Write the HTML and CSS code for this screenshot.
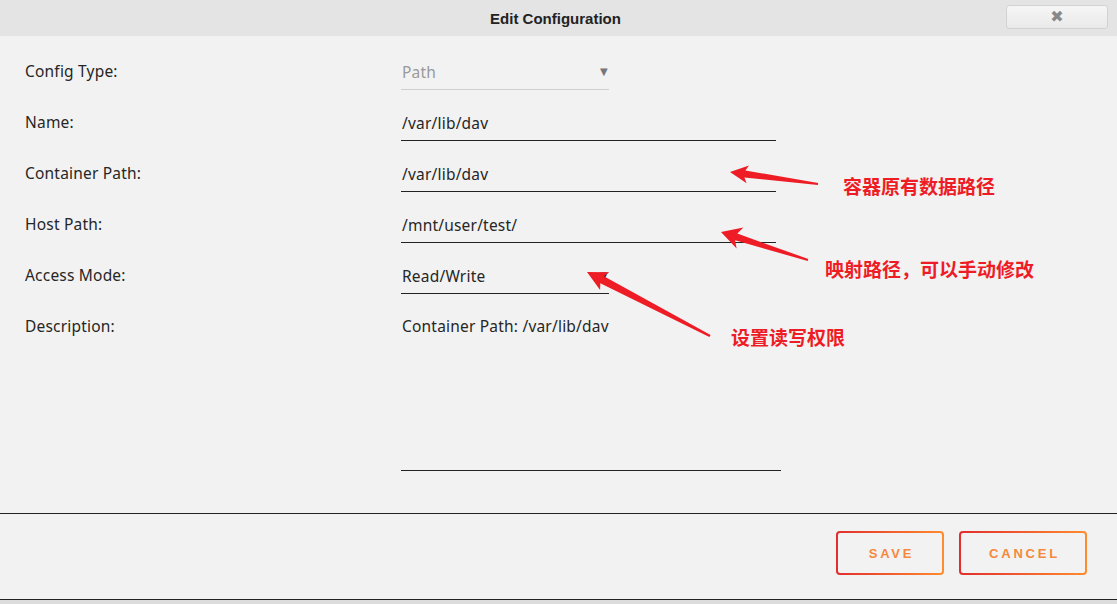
FILE: index.html
```html
<!DOCTYPE html>
<html lang="en">
<head>
  <meta charset="UTF-8" />
  <meta name="viewport" content="width=device-width, initial-scale=1.0"/>
  <title>Edit Configuration</title>
  <link rel="stylesheet" href="styles.css">
</head>
<body>
  <div class="dialog">
    <div class="titlebar">
      <span class="title">Edit Configuration</span>
      <button class="close" type="button">✖</button>
    </div>

    <form class="form">
      <div class="row">
        <label class="label">Config Type:</label>
        <div class="field select muted">Path<span class="caret">▼</span></div>
      </div>
      <div class="row">
        <label class="label">Name:</label>
        <div class="field">/var/lib/dav</div>
      </div>
      <div class="row">
        <label class="label">Container Path:</label>
        <div class="field">/var/lib/dav</div>
      </div>
      <div class="row">
        <label class="label">Host Path:</label>
        <div class="field">/mnt/user/test/</div>
      </div>
      <div class="row">
        <label class="label">Access Mode:</label>
        <div class="field select">Read/Write<span class="caret">▼</span></div>
      </div>
      <div class="row">
        <label class="label">Description:</label>
        <div class="field textarea">Container Path: /var/lib/dav</div>
      </div>
    </form>

    <div class="footer">
      <button class="btn save" type="button">SAVE</button>
      <button class="btn cancel" type="button">CANCEL</button>
    </div>
  </div>

  <!-- annotations drawn over the screenshot -->
  <div class="notes">
    <svg width="1117" height="604" viewBox="0 0 1117 604">
      <polygon fill="#ee1c25" points="730,172 749,165.5 745.4,170.5 818.1,183 817.9,185 744.4,177.5 746.6,183.3"/>
      <polygon fill="#ee1c25" points="721,232 743.4,227.6 737.3,233.6 808.3,259 807.7,261 735.1,240.2 736.6,248.6"/>
      <polygon fill="#ee1c25" points="587,272 609.3,272.3 603.9,276.3 710.6,334.9 709.4,337.1 600.3,283.3 600.1,290.1"/>
    </svg>
    <span class="note note-1">容器原有数据路径</span>
    <span class="note note-2">映射路径，可以手动修改</span>
    <span class="note note-3">设置读写权限</span>
  </div>
</body>
</html>
```

FILE: styles.css
```css
* {
  box-sizing: border-box;
}

body {
  margin: 0;
  height: 604px;
  overflow: hidden;
  background: #dcdcdc;
  font-family: 'Noto Sans', 'Open Sans', sans-serif;
  color: #262626;
  position: relative;
}

.dialog {
  background: #f2f2f2;
}

.titlebar {
  height: 36px;
  background: #e4e4e4;
  display: grid;
  grid-template-columns: 1fr auto 1fr;
  align-items: center;
}

.title {
  grid-column: 2;
  font-family: 'Liberation Sans', Arial, sans-serif;
  font-size: 15px;
  font-weight: bold;
  color: #222;
  margin-left: -6px;
}

.close {
  grid-column: 3;
  justify-self: end;
  margin-right: 9px;
  margin-top: -2px;
  width: 102px;
  height: 24px;
  border: 1px solid #d2d2d2;
  border-radius: 3px;
  background: linear-gradient(#f6f6f6, #e9e9e9);
  color: #888;
  font-family: 'DejaVu Sans', sans-serif;
  font-size: 16px;
  padding: 0;
  line-height: 22px;
}

.form {
  padding: 18px 0 42px;
  display: flex;
  flex-direction: column;
  gap: 15px;
}

.row {
  display: grid;
  grid-template-columns: 376px auto;
  padding-left: 25px;
  font-size: 15.5px;
  letter-spacing: 0.2px;
  line-height: 20px;
}

.label {
  padding-top: 7px;
}

.field {
  width: 375px;
  height: 36px;
  padding: 8px 0 7px 1px;
  border-bottom: 1px solid #222;
}

.select {
  width: 208px;
  display: flex;
  justify-content: space-between;
  padding-right: 1px;
}

.muted {
  color: #9a9a9a;
  border-bottom-color: #cfcfcf;
}

.caret {
  font-family: 'DejaVu Sans', sans-serif;
  font-size: 10px;
  color: #222;
}

.muted .caret {
  color: #777;
}

.textarea {
  width: 380px;
  height: 162px;
  padding-top: 7px;
}

.footer {
  border-top: 1px solid #222;
  border-bottom: 1px solid #222;
  padding: 17px 30px 24px;
  display: flex;
  justify-content: flex-end;
  gap: 15px;
}

.btn {
  height: 44px;
  border: 2px solid transparent;
  border-radius: 4px;
  background: linear-gradient(#f2f2f2, #f2f2f2) padding-box,
              linear-gradient(90deg, #e22d2d, #ff8c2f) border-box;
  color: #f6883a;
  font-family: 'Liberation Sans', Arial, sans-serif;
  font-size: 13px;
  font-weight: bold;
  letter-spacing: 2.8px;
  padding: 0 0 0 3px;
}

.save {
  width: 108px;
}

.cancel {
  width: 128px;
}

.notes {
  position: absolute;
  inset: 0;
  pointer-events: none;
}

.notes svg {
  position: absolute;
  top: 0;
  left: 0;
}

.note {
  position: absolute;
  font-family: 'Noto Sans CJK SC', sans-serif;
  font-weight: bold;
  font-size: 19px;
  line-height: 1;
  color: #ee1c25;
  white-space: nowrap;
}

.note-1 { left: 843px; top: 176px; }
.note-2 { left: 825px; top: 259px; }
.note-3 { left: 731px; top: 327px; }
```
